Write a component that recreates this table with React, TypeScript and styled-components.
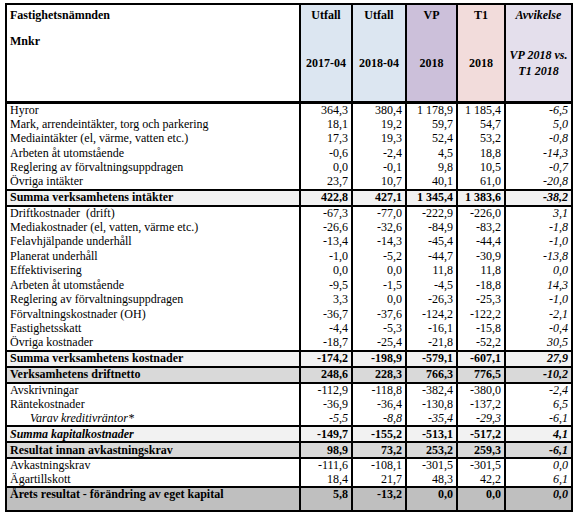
import React from "react";
import styled, { createGlobalStyle } from "styled-components";

const GlobalStyle = createGlobalStyle`
  body {
    margin: 0;
    background: #fff;
    font-family: "Liberation Serif", "Times New Roman", serif;
    color: #000;
  }
`;

type Kind = "normal" | "sum" | "net" | "final";

interface Line {
  label: string;
  values: string[];
  kind?: Kind;
  italic?: boolean;
  indent?: boolean;
}

const lines: Line[] = [
  { label: "Hyror", values: ["364,3", "380,4", "1 178,9", "1 185,4", "-6,5"] },
  { label: "Mark, arrendeintäkter, torg och parkering", values: ["18,1", "19,2", "59,7", "54,7", "5,0"] },
  { label: "Mediaintäkter (el, värme, vatten etc.)", values: ["17,3", "19,3", "52,4", "53,2", "-0,8"] },
  { label: "Arbeten åt utomstående", values: ["-0,6", "-2,4", "4,5", "18,8", "-14,3"] },
  { label: "Reglering av förvaltningsuppdragen", values: ["0,0", "-0,1", "9,8", "10,5", "-0,7"] },
  { label: "Övriga intäkter", values: ["23,7", "10,7", "40,1", "61,0", "-20,8"] },
  { label: "Summa verksamhetens intäkter", values: ["422,8", "427,1", "1 345,4", "1 383,6", "-38,2"], kind: "sum" },
  { label: "Driftkostnader  (drift)", values: ["-67,3", "-77,0", "-222,9", "-226,0", "3,1"] },
  { label: "Mediakostnader (el, vatten, värme etc.)", values: ["-26,6", "-32,6", "-84,9", "-83,2", "-1,8"] },
  { label: "Felavhjälpande underhåll", values: ["-13,4", "-14,3", "-45,4", "-44,4", "-1,0"] },
  { label: "Planerat underhåll", values: ["-1,0", "-5,2", "-44,7", "-30,9", "-13,8"] },
  { label: "Effektivisering", values: ["0,0", "0,0", "11,8", "11,8", "0,0"] },
  { label: "Arbeten åt utomstående", values: ["-9,5", "-1,5", "-4,5", "-18,8", "14,3"] },
  { label: "Reglering av förvaltningsuppdragen", values: ["3,3", "0,0", "-26,3", "-25,3", "-1,0"] },
  { label: "Förvaltningskostnader (OH)", values: ["-36,7", "-37,6", "-124,2", "-122,2", "-2,1"] },
  { label: "Fastighetsskatt", values: ["-4,4", "-5,3", "-16,1", "-15,8", "-0,4"] },
  { label: "Övriga kostnader", values: ["-18,7", "-25,4", "-21,8", "-52,2", "30,5"] },
  { label: "Summa verksamhetens kostnader", values: ["-174,2", "-198,9", "-579,1", "-607,1", "27,9"], kind: "sum" },
  { label: "Verksamhetens driftnetto", values: ["248,6", "228,3", "766,3", "776,5", "-10,2"], kind: "net" },
  { label: "Avskrivningar", values: ["-112,9", "-118,8", "-382,4", "-380,0", "-2,4"] },
  { label: "Räntekostnader", values: ["-36,9", "-36,4", "-130,8", "-137,2", "6,5"] },
  { label: "Varav kreditivräntor*", values: ["-5,5", "-8,8", "-35,4", "-29,3", "-6,1"], italic: true, indent: true },
  { label: "Summa kapitalkostnader", values: ["-149,7", "-155,2", "-513,1", "-517,2", "4,1"], kind: "sum", italic: true },
  { label: "Resultat innan avkastningskrav", values: ["98,9", "73,2", "253,2", "259,3", "-6,1"], kind: "net" },
  { label: "Avkastningskrav", values: ["-111,6", "-108,1", "-301,5", "-301,5", "0,0"] },
  { label: "Ägartillskott", values: ["18,4", "21,7", "48,3", "42,2", "6,1"] },
  { label: "Årets resultat - förändring av eget kapital", values: ["5,8", "-13,2", "0,0", "0,0", "0,0"], kind: "final" },
];

const columns = [
  { top: "Utfall", bottom: ["2017-04"], bg: "#dce6f1", width: 52 },
  { top: "Utfall", bottom: ["2018-04"], bg: "#dce6f1", width: 54 },
  { top: "VP", bottom: ["2018"], bg: "#ccc0da", width: 51 },
  { top: "T1", bottom: ["2018"], bg: "#f2dcdb", width: 48 },
  { top: "Avvikelse", bottom: ["VP 2018 vs.", "T1 2018"], bg: "#e4dfec", width: 67, italic: true },
];

const rowBg: Record<Kind, string> = {
  normal: "#ffffff",
  sum: "#f2f2f2",
  net: "#d9d9d9",
  final: "#bfbfbf",
};

const Page = styled.div`
  padding: 3px 5px;
`;

const Table = styled.table`
  border-collapse: collapse;
  table-layout: fixed;
  width: 566px;
  border: 2px solid #000;
  font-size: 12px;
  line-height: 13px;
`;

const Col = styled.col<{ $w: number }>`
  width: ${(p) => p.$w}px;
`;

const TopHead = styled.th<{ $bg: string; $italic?: boolean }>`
  background: ${(p) => p.$bg};
  font-weight: bold;
  font-style: ${(p) => (p.$italic ? "italic" : "normal")};
  text-align: center;
  vertical-align: top;
  height: 20px;
  padding: 4px 2px 0;
  border-left: 2px solid #000;
`;

const SubHead = styled(TopHead)`
  vertical-align: middle;
  height: 66px;
  padding: 0 2px 4px;
  border-bottom: 3px solid #000;
  line-height: 16px;
`;

const TitleHead = styled.th`
  text-align: left;
  vertical-align: top;
  font-weight: bold;
  padding: 4px 3px 0;
  height: 20px;
`;

const UnitHead = styled(TitleHead)`
  height: 66px;
  padding: 6px 3px 0;
  border-bottom: 3px solid #000;
`;

const Row = styled.tr<{ $kind: Kind }>`
  background: ${(p) => rowBg[p.$kind]};
  height: ${(p) => (p.$kind === "normal" ? "14.5px" : p.$kind === "final" ? "24px" : "16px")};
  font-weight: ${(p) => (p.$kind === "normal" ? "normal" : "bold")};
  border-top: ${(p) => (p.$kind === "normal" ? "none" : "2px solid #000")};
  border-bottom: ${(p) => (p.$kind === "normal" ? "none" : "2px solid #000")};
`;

const LabelCell = styled.td<{ $italic?: boolean; $indent?: boolean; $final?: boolean }>`
  padding: 0 3px 0 ${(p) => (p.$indent ? "23px" : "3px")};
  font-style: ${(p) => (p.$italic ? "italic" : "normal")};
  white-space: pre;
  vertical-align: ${(p) => (p.$final ? "top" : "middle")};
  overflow: hidden;
`;

const NumCell = styled.td<{ $italic?: boolean; $final?: boolean }>`
  text-align: right;
  padding: 0 3px 0 0;
  white-space: nowrap;
  font-style: ${(p) => (p.$italic ? "italic" : "normal")};
  vertical-align: ${(p) => (p.$final ? "top" : "middle")};
  border-left: 2px solid #000;
`;

const App = () => {
  return (
    <Page>
      <GlobalStyle />
      <Table>
        <colgroup>
          <Col $w={294} />
          {columns.map((c, i) => (
            <Col key={i} $w={c.width} />
          ))}
        </colgroup>
        <thead>
          <tr>
            <TitleHead>Fastighetsnämnden</TitleHead>
            {columns.map((c, i) => (
              <TopHead key={i} $bg={c.bg} $italic={c.italic}>
                {c.top}
              </TopHead>
            ))}
          </tr>
          <tr>
            <UnitHead>Mnkr</UnitHead>
            {columns.map((c, i) => (
              <SubHead key={i} $bg={c.bg} $italic={c.italic}>
                {c.bottom.map((b) => (
                  <div key={b}>{b}</div>
                ))}
              </SubHead>
            ))}
          </tr>
        </thead>
        <tbody>
          {lines.map((line, i) => {
            const kind = line.kind ?? "normal";
            const final = kind === "final";
            return (
              <Row key={i} $kind={kind}>
                <LabelCell $italic={line.italic} $indent={line.indent} $final={final}>
                  {line.label}
                </LabelCell>
                {line.values.map((v, j) => (
                  <NumCell
                    key={j}
                    $final={final}
                    $italic={j === 4 || (line.italic && kind === "normal")}
                  >
                    {v}
                  </NumCell>
                ))}
              </Row>
            );
          })}
        </tbody>
      </Table>
    </Page>
  );
};

export default App;
